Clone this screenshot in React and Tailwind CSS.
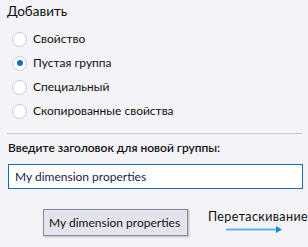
import React from "react";

const Radio = ({ checked, label }) => (
  <div className="flex items-center h-[24px]">
    <div className="w-[15px] h-[15px] rounded-full border border-[#c9c9ce] bg-white flex items-center justify-center ml-[12px]">
      {checked && <div className="w-[6px] h-[6px] rounded-full bg-[#1a6bb8]" />}
    </div>
    <span className="ml-[6px] text-[12px] leading-[16px] text-[#111]">{label}</span>
  </div>
);

export default function App() {
  return (
    <div
      className="w-[308px] h-[247px] bg-[#f3f3f8] overflow-hidden relative whitespace-nowrap"
      style={{ fontFamily: 'Lato, "Noto Sans", sans-serif' }}
    >
      <div className="pl-[7px] pt-[2px] text-[13.5px] leading-[18px] text-[#111]">Добавить</div>
      <div className="pt-[7px] flex flex-col">
        <Radio label="Свойство" />
        <Radio checked label="Пустая группа" />
        <Radio label="Специальный" />
        <Radio label="Скопированные свойства" />
      </div>
      <div className="ml-[7px] mt-[10px] h-px bg-[#c8c8cc] w-[295px]" />
      <div className="pl-[8px] mt-[6px] text-[12px] leading-[16px] font-semibold text-[#111]">
        Введите заголовок для новой группы:
      </div>
      <div className="ml-[8px] mt-[8px] w-[295px] h-[25px] border border-[#1b6aa8] bg-white flex items-center pl-[6px] text-[12px] text-[#1a1a50]">
        My dimension properties
      </div>
      <div className="flex items-start mt-[20px]">
        <div className="ml-[43px] w-[150px] h-[27px] border border-[#8c8c98] bg-[#e4e4ee] shadow-[1px_1px_2px_rgba(0,0,0,0.25)] flex items-center pl-[5px] text-[12px] text-[#111]">
          My dimension properties
        </div>
        <div className="ml-[20px] flex flex-col">
          <span className="text-[12.5px] leading-[16px] tracking-[0.4px] text-[#111]">Перетаскивание</span>
          <svg width="60" height="9" className="ml-[18px] mt-[0px]">
            <line x1="0" y1="4.5" x2="51" y2="4.5" stroke="#62b6e4" strokeWidth="2" />
            <polygon points="50,1 56,4.5 50,8" fill="#1589d4" />
          </svg>
        </div>
      </div>
    </div>
  );
}
